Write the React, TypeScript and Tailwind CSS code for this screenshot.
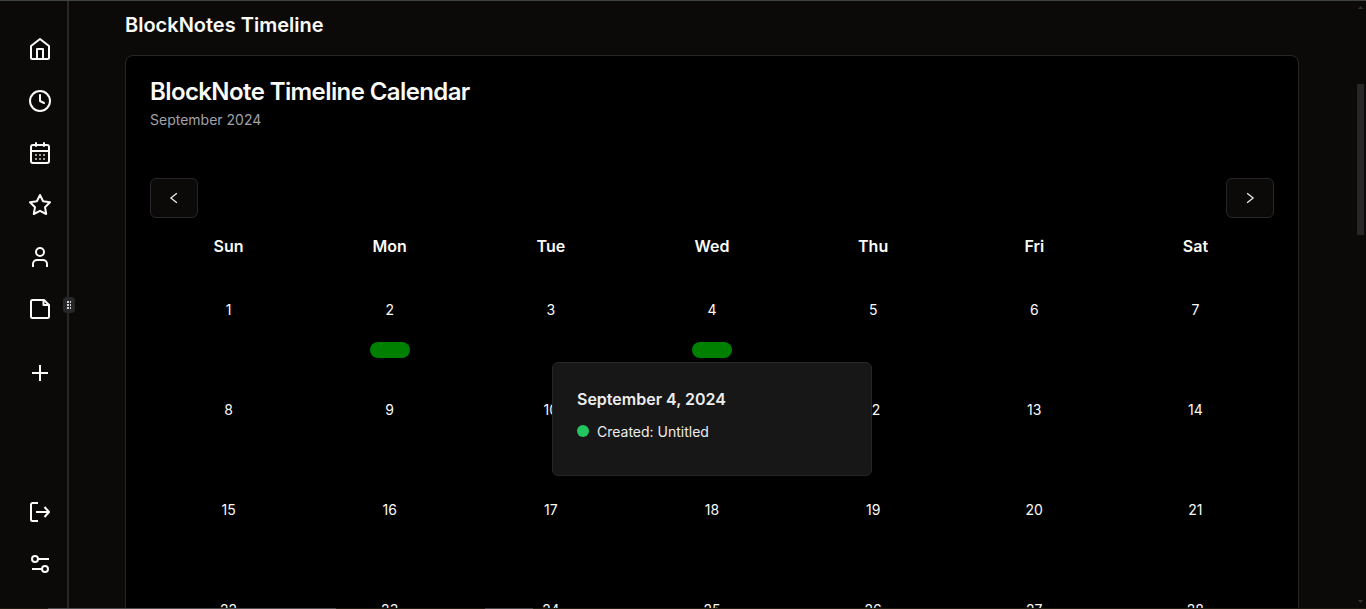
import type { ReactNode } from "react";

function Icon({ children, className = "" }: { children: ReactNode; className?: string }) {
  return (
    <svg
      viewBox="0 0 24 24"
      className={`size-6 shrink-0 ${className}`}
      fill="none"
      stroke="currentColor"
      strokeWidth="2"
      strokeLinecap="butt"
      strokeLinejoin="round"
    >
      {children}
    </svg>
  );
}

const weekdays = ["Sun", "Mon", "Tue", "Wed", "Thu", "Fri", "Sat"];
const days = Array.from({ length: 28 }, (_, i) => i + 1);
const activeDays = [2, 4];

function Sidebar() {
  return (
    <aside className="flex w-[67px] shrink-0 flex-col items-center pt-[36px] pb-[32px] pl-[13px]">
      <div className="flex flex-col gap-7">
        <Icon>
          <path d="M3 20.500V9l9-7 9 7v11.500a1.500 1.500 0 0 1-1.500 1.500h-15A1.500 1.500 0 0 1 3 20.500z" />
          <path d="M9 22V12h6v10" />
        </Icon>
        <Icon>
          <circle cx="12" cy="12" r="10" />
          <path d="M12 6v6l4 2" strokeLinecap="round" />
        </Icon>
        <Icon>
          <rect x="3" y="4" width="18" height="18" rx="2" />
          <path d="M3 10h18" />
          <path d="M8 2v3M16 2v3" strokeLinecap="round" />
          <path
            d="M7.200 14h1.600M11.200 14h1.600M15.200 14h1.600M7.200 18h1.600M11.200 18h1.600M15.200 18h1.600"
            strokeWidth="1.600"
          />
        </Icon>
        <Icon>
          <path d="M12 2l3.100 6.300 6.900 1-5 4.900 1.200 6.800L12 17.800 5.800 21 7 14.200 2 9.300l6.900-1z" />
        </Icon>
        <Icon>
          <circle cx="12" cy="7" r="4" />
          <path d="M5 22v-3a4 4 0 0 1 4-4h6a4 4 0 0 1 4 4v3" />
        </Icon>
        <Icon>
          <path d="M3 19.500v-15A1.500 1.500 0 0 1 4.500 3H16l5 5v11.500a1.500 1.500 0 0 1-1.500 1.500h-15A1.500 1.500 0 0 1 3 19.500z" />
          <path d="M15.500 3v5H21" />
        </Icon>
      </div>
      <Icon className="mt-10">
        <path d="M12 4v16M4 12h16" />
      </Icon>
      <div className="mt-auto flex flex-col gap-7">
        <Icon>
          <path d="M10 3H4.500A1.500 1.500 0 0 0 3 4.500v15A1.500 1.500 0 0 0 4.500 21H10" />
          <path d="M8 12h13M16.500 7l4.500 5-4.500 5" />
        </Icon>
        <Icon>
          <circle cx="7" cy="7" r="3" />
          <circle cx="17" cy="17" r="3" />
          <path d="M10 7h11M4 17h10" />
        </Icon>
      </div>
    </aside>
  );
}

function ResizeHandle() {
  return (
    <div className="relative w-[2px] shrink-0 bg-[#27272a]">
      <div className="absolute top-[296px] -left-1 flex h-4 w-3 items-center justify-center rounded-sm bg-[#27272a]">
        <div className="grid grid-cols-2 gap-px">
          {Array.from({ length: 6 }, (_, i) => (
            <span key={i} className="h-[2px] w-[1.500px] bg-[#d4d4d4]" />
          ))}
        </div>
      </div>
    </div>
  );
}

function NavButton({ d, label }: { d: string; label: string }) {
  return (
    <button
      aria-label={label}
      className="flex h-10 w-12 items-center justify-center rounded-md border border-[#27272a] bg-[#0c0a09]"
    >
      <svg viewBox="0 0 16 16" className="size-4" fill="none" stroke="currentColor" strokeWidth="1.100">
        <path d={d} />
      </svg>
    </button>
  );
}

function DayTooltip() {
  return (
    <div className="absolute top-[88px] left-1/2 z-10 h-[114px] w-80 -translate-x-1/2 rounded-md border border-[#27272a] bg-[#171717] p-6 text-left text-[#ededed]">
      <h3 className="text-base leading-6 font-semibold">September 4, 2024</h3>
      <div className="mt-[11px] flex items-center gap-2">
        <span className="mb-0.5 size-3 rounded-full bg-[#22c55e]" />
        <span className="text-sm leading-5">Created: Untitled</span>
      </div>
    </div>
  );
}

export default function App() {
  return (
    <div className="flex h-[609px] w-full flex-col overflow-hidden bg-[#0c0a09] font-['Inter',sans-serif] text-[#fafaf9]">
      <div className="h-px shrink-0 bg-[#3f4441]" />
      <div className="flex min-h-0 flex-1">
        <Sidebar />
        <ResizeHandle />
        <main className="min-w-0 flex-1 overflow-hidden pt-[10px] pr-[58px] pl-14">
          <h1 className="text-xl leading-7 font-semibold">BlockNotes Timeline</h1>
          <section className="mt-4 h-[700px] rounded-lg border border-[#27272a] bg-black px-6 pt-6">
            <h2 className="text-2xl leading-6 font-semibold tracking-tight">BlockNote Timeline Calendar</h2>
            <p className="mt-1.5 text-sm leading-5 text-[#a1a1aa]">September 2024</p>
            <div className="mt-12 flex justify-between">
              <NavButton label="Previous month" d="M10.900 3.200 4.800 8l6.100 4.800" />
              <NavButton label="Next month" d="M5.100 3.200 11.200 8l-6.100 4.800" />
            </div>
            <div className="mt-4 grid grid-cols-7 gap-1 text-center">
              {weekdays.map((day) => (
                <div key={day} className="text-base leading-6 font-semibold">{day}</div>
              ))}
            </div>
            <div className="mt-4 grid grid-cols-7 gap-1 text-center">
              {days.map((day) => (
                <div key={day} className="relative flex h-24 flex-col items-center pt-[26px]">
                  <span className="text-sm leading-5">{day}</span>
                  {activeDays.includes(day) && <span className="mt-[22px] h-4 w-10 rounded-full bg-[#008000]" />}
                  {day === 4 && <DayTooltip />}
                </div>
              ))}
            </div>
          </section>
        </main>
        <div className="flex w-[9px] shrink-0 flex-col items-start pb-[5px]">
          <svg viewBox="0 0 5 3" className="mt-[5px] ml-px h-[3px] w-[5px]" fill="#333335">
            <path d="M2.500 0 5 3H0z" />
          </svg>
          <div className="mt-[75px] h-[151px] w-[7px] bg-[#27272a]" />
          <svg viewBox="0 0 5 3" className="mt-auto ml-px h-[3px] w-[5px]" fill="#333335">
            <path d="M2.500 3 5 0H0z" />
          </svg>
        </div>
      </div>
      <div className="flex h-px shrink-0 bg-[#1d1a12]">
        <div className="ml-12 w-[288px] bg-[#4b4b4b]" />
        <div className="ml-[149px] w-12 bg-[#444444]" />
      </div>
    </div>
  );
}
